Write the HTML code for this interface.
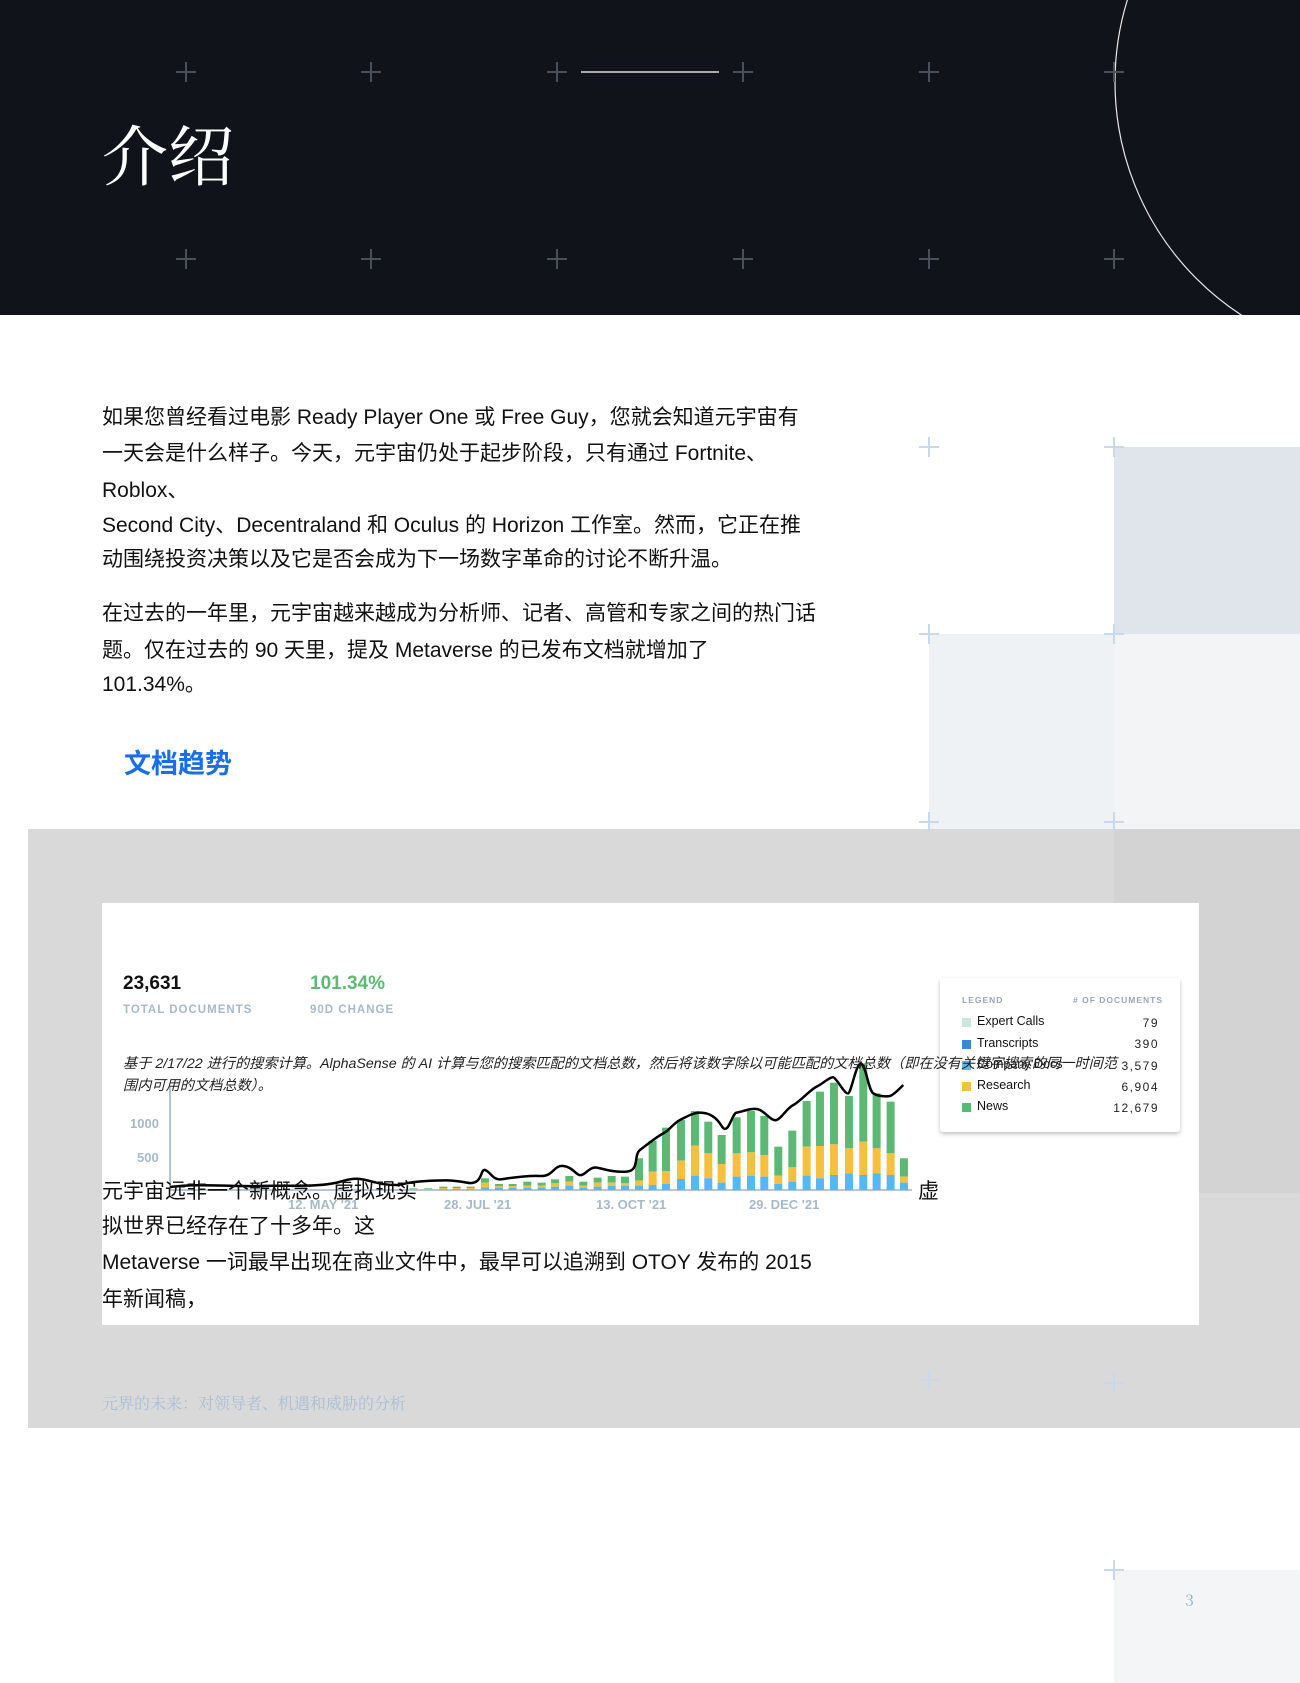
<!DOCTYPE html>
<html><head><meta charset="utf-8"><style>
*{margin:0;padding:0;box-sizing:border-box}
body{width:1300px;height:1683px;position:relative;background:#fff;font-family:"Liberation Sans","Noto Sans CJK SC",sans-serif;overflow:hidden}
.a{position:absolute}
.p{position:absolute;left:102px;font-size:21px;color:#111;white-space:nowrap;line-height:36px}
.c{position:absolute;width:20px;height:20px}
.c:before{content:"";position:absolute;left:9px;top:0;width:1.5px;height:20px;background:currentColor}
.c:after{content:"";position:absolute;top:9px;left:0;height:1.5px;width:20px;background:currentColor}
.d{color:#4a5058}.l{color:#c9d8ea}
.lg{position:absolute;font-size:12.5px;color:#111;left:977px}
.lv{position:absolute;font-size:12px;right:141px;color:#222;letter-spacing:1.5px}
.sq{position:absolute;left:962px;width:9px;height:9px}
</style></head><body>
<div class="a" style="left:0;top:0;width:1300px;height:315px;background:#10141a;overflow:hidden">
<svg class="a" style="left:0;top:0" width="1300" height="315"><circle cx="1393" cy="82" r="278" fill="none" stroke="#e8e8e8" stroke-width="1.2"/><line x1="581" y1="72" x2="719" y2="72" stroke="#aaa" stroke-width="2"/></svg>
<div class="a" style="left:102px;top:112px;font-size:66px;color:#fff;font-family:'Noto Serif CJK SC',serif;line-height:80px">介绍</div>
</div>
<div class="c d" style="left:176px;top:62px"></div><div class="c d" style="left:361px;top:62px"></div><div class="c d" style="left:547px;top:62px"></div><div class="c d" style="left:733px;top:62px"></div><div class="c d" style="left:919px;top:62px"></div><div class="c d" style="left:1104px;top:62px"></div>
<div class="c d" style="left:176px;top:249px"></div><div class="c d" style="left:361px;top:249px"></div><div class="c d" style="left:547px;top:249px"></div><div class="c d" style="left:733px;top:249px"></div><div class="c d" style="left:919px;top:249px"></div><div class="c d" style="left:1104px;top:249px"></div>

<div class="a" style="left:1114px;top:447px;width:186px;height:187px;background:#dfe5ea"></div>
<div class="a" style="left:929px;top:634px;width:185px;height:195px;background:#eef2f5"></div>
<div class="a" style="left:1114px;top:634px;width:186px;height:195px;background:#f3f4f6"></div>
<div class="a" style="left:28px;top:829px;width:1272px;height:599px;background:#d9d9d9"></div>
<div class="a" style="left:1114px;top:829px;width:186px;height:364px;background:#d3d3d3"></div>
<div class="a" style="left:1114px;top:1570px;width:186px;height:113px;background:#f4f5f7"></div>
<div class="c l" style="left:919px;top:437px"></div><div class="c l" style="left:1104px;top:437px"></div><div class="c l" style="left:919px;top:624px"></div><div class="c l" style="left:1104px;top:624px"></div><div class="c l" style="left:919px;top:812px"></div><div class="c l" style="left:1104px;top:812px"></div><div class="c l" style="left:919px;top:1370px"></div><div class="c l" style="left:1104px;top:1373px"></div><div class="c l" style="left:1104px;top:1560px"></div>

<div class="p" style="top:400px">如果您曾经看过电影 Ready Player One 或 Free Guy，您就会知道元宇宙有</div>
<div class="p" style="top:436px">一天会是什么样子。今天，元宇宙仍处于起步阶段，只有通过 Fortnite、</div>
<div class="p" style="top:473px">Roblox、</div>
<div class="p" style="top:508px">Second City、Decentraland 和 Oculus 的 Horizon 工作室。然而，它正在推</div>
<div class="p" style="top:542px">动围绕投资决策以及它是否会成为下一场数字革命的讨论不断升温。</div>
<div class="p" style="top:596px">在过去的一年里，元宇宙越来越成为分析师、记者、高管和专家之间的热门话</div>
<div class="p" style="top:633px">题。仅在过去的 90 天里，提及 Metaverse 的已发布文档就增加了</div>
<div class="p" style="top:667px">101.34%。</div>
<div class="a" style="left:124px;top:742px;font-size:27px;color:#1a6ee8;white-space:nowrap;font-weight:bold">文档趋势</div>

<div class="a" style="left:102px;top:903px;width:1097px;height:422px;background:#fff"></div>
<div class="a" style="left:123px;top:973px;font-size:19px;font-weight:bold;color:#111">23,631</div>
<div class="a" style="left:123px;top:1004px;font-size:11.5px;font-weight:bold;color:#a9b8c8;letter-spacing:1px">TOTAL DOCUMENTS</div>
<div class="a" style="left:310px;top:973px;font-size:19px;font-weight:bold;color:#5cb874">101.34%</div>
<div class="a" style="left:310px;top:1004px;font-size:11.5px;font-weight:bold;color:#a9b8c8;letter-spacing:1px">90D CHANGE</div>

<div class="a" style="left:940px;top:978px;width:240px;height:154px;background:#fff;box-shadow:0 2px 4px rgba(0,0,0,.25);border-radius:3px"></div>
<div class="a" style="left:962px;top:995px;font-size:8.5px;color:#9aa6b4;letter-spacing:1px;font-weight:bold">LEGEND</div>
<div class="a" style="left:1073px;top:995px;font-size:8.5px;color:#9aa6b4;letter-spacing:1px;font-weight:bold"># OF DOCUMENTS</div>
<div class="sq" style="top:1018px;background:#c8e8dc"></div><div class="lg" style="top:1014px">Expert Calls</div><div class="lv" style="top:1016px">79</div>
<div class="sq" style="top:1040px;background:#3f86d0"></div><div class="lg" style="top:1036px">Transcripts</div><div class="lv" style="top:1037px">390</div>
<div class="sq" style="top:1061px;background:#55b8f0"></div><div class="lg" style="top:1057px">Company Docs</div><div class="lv" style="top:1059px">3,579</div>
<div class="sq" style="top:1082px;background:#f5bf3f"></div><div class="lg" style="top:1078px">Research</div><div class="lv" style="top:1080px">6,904</div>
<div class="sq" style="top:1103px;background:#5cb874"></div><div class="lg" style="top:1099px">News</div><div class="lv" style="top:1101px">12,679</div>

<svg class="a" style="left:0;top:0" width="1300" height="1683">
<line x1="170" y1="1087" x2="170" y2="1190" stroke="#b7c4d2" stroke-width="2"/>
<line x1="170" y1="1190" x2="912" y2="1190" stroke="#b7c4d2" stroke-width="2"/>
<text x="130" y="1128" font-size="13" font-weight="bold" fill="#a9b8c8" font-family="Liberation Sans">1000</text>
<text x="137" y="1162" font-size="13" font-weight="bold" fill="#a9b8c8" font-family="Liberation Sans">500</text>
<g font-size="13" font-weight="bold" fill="#a9b8c8" font-family="Liberation Sans">
<text x="288" y="1209">12. MAY '21</text><text x="444" y="1209">28. JUL '21</text><text x="596" y="1209">13. OCT '21</text><text x="749" y="1209">29. DEC '21</text></g>
<path d="M170 1187 C200 1183 230 1187 260 1186 S320 1188 343 1181 S370 1186 400 1185" fill="none" stroke="#000" stroke-width="2.5"/>
<g transform="translate(400,1040) scale(0.3333)" id="bars"></g>
</svg>

<div class="a" style="left:123px;top:1053px;font-size:14.2px;font-style:italic;color:#222;white-space:nowrap;line-height:22px">基于 2/17/22 进行的搜索计算。AlphaSense 的 AI 计算与您的搜索匹配的文档总数，然后将该数字除以可能匹配的文档总数（即在没有关键字搜索的同一时间范<br>围内可用的文档总数）。</div>

<div class="p" style="top:1174px">元宇宙远非一个新概念。虚拟现实</div>
<div class="p" style="top:1174px;left:918px">虚</div>
<div class="p" style="top:1209px">拟世界已经存在了十多年。这</div>
<div class="p" style="top:1245px">Metaverse 一词最早出现在商业文件中，最早可以追溯到 OTOY 发布的 2015</div>
<div class="p" style="top:1282px">年新闻稿，</div>

<div class="a" style="left:102px;top:1391px;font-size:16px;color:#a9bdd3;font-family:'Noto Serif CJK SC',serif;white-space:nowrap">元界的未来：对领导者、机遇和威胁的分析</div>
<div class="a" style="left:1185px;top:1588px;font-size:16px;color:#8fb0d0;font-family:'Noto Serif CJK SC',serif">3</div>
<script>
var d=[[40,445,447,449],[85,445,447,449],[130,440,444,448],[170,440,444,448],[212,440,444,448],[255,415,428,442],[297,432,438,444],[338,432,438,444],[382,425,437,443],[425,428,437,443],[465,418,430,440],[508,408,425,438],[550,425,437,443],[593,413,428,440],[635,408,428,438],[675,410,430,438],[717,355,422,437],[758,302,395,435],[798,263,393,432],[843,240,362,417],[885,213,317,407],[925,245,340,415],[965,285,372,428],[1010,232,340,410],[1053,213,337,407],[1093,228,345,410],[1135,320,407,432],[1177,272,382,425],[1220,183,320,407],[1260,155,318,415],[1302,128,313,405],[1347,168,325,400],[1390,70,305,405],[1430,160,325,400],[1472,185,340,405],[1512,355,410,428]];
var s='';d.forEach(function(b){var x=b[0]-12;s+='<rect x="'+x+'" y="'+b[1]+'" width="24" height="'+(b[2]-b[1])+'" fill="#5cb874"/><rect x="'+x+'" y="'+b[2]+'" width="24" height="'+(b[3]-b[2])+'" fill="#f5bf3f"/><rect x="'+x+'" y="'+b[3]+'" width="24" height="'+(450-b[3])+'" fill="#55b8f0"/>';});
s+='<path d="M0 435 C20 428 40 425 80 423 S150 418 200 428 S240 385 255 390 S280 420 300 418 S380 405 420 408 S460 375 490 378 S530 410 545 405 S570 380 590 383 S640 398 680 395 S700 345 720 330 S770 290 790 280 S820 250 840 240 S880 218 900 218 S945 225 965 258 S995 220 1010 218 S1060 200 1080 210 S1115 245 1130 240 S1160 205 1180 195 S1230 150 1250 140 S1290 110 1300 112 S1335 165 1345 160 S1370 60 1385 72 S1405 150 1420 160 S1460 170 1470 168 S1500 145 1510 135" fill="none" stroke="#000" stroke-width="7.5"/>';
document.getElementById('bars').innerHTML=s;
</script>
</body></html>
